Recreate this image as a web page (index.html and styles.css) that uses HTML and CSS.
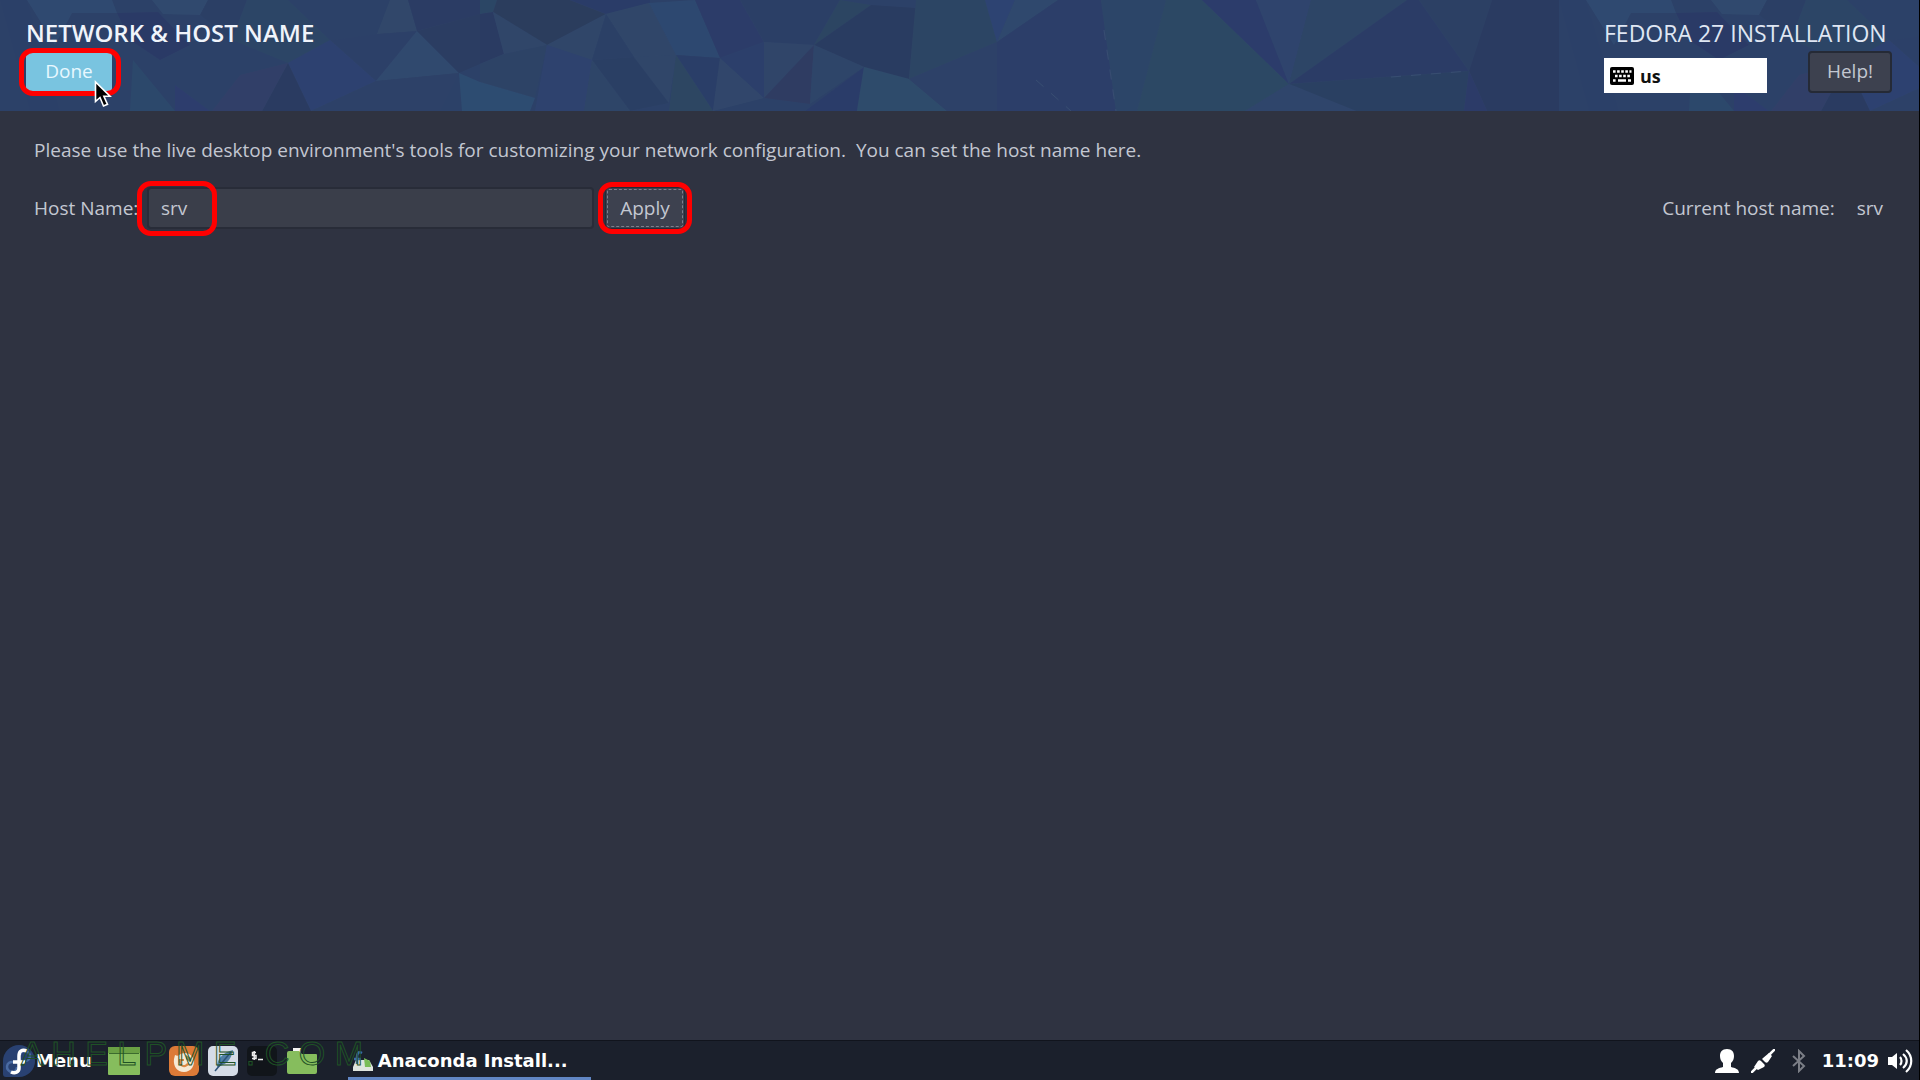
FILE: index.html
```html
<!DOCTYPE html>
<html lang="en">
<head>
  <meta charset="UTF-8">
  <title>Network &amp; Host Name</title>
  <meta name="viewport" content="width=device-width, initial-scale=1.0">
  <link rel="stylesheet" href="styles.css">
</head>
<body>
  <header class="topbar">
    <svg class="topbar-bg" aria-hidden="true">
      <defs>
        <pattern id="facets" width="1559" height="111" patternUnits="userSpaceOnUse">
          <path fill="#2b4068" d="M0 0h27l33 111H30z"/>
          <path fill="#304b72" d="M27 0h85l5 13H72L55 45z"/>
          <path fill="#2a3966" d="M117 13l41-1 32 33-30 15-30-20z"/>
          <path fill="#314b70" d="M152 0h56l-8 15-37-1z"/>
          <path fill="#2b3f65" d="M208 0h39l-15 40-32-25z"/>
          <path fill="#2c4666" d="M247 0h41l42 40-42 23-56-23z"/>
          <path fill="#32496b" d="M390 0h18l9 31-40 3z"/>
          <path fill="#2b3c64" d="M408 0h72v15l-63 16z"/>
          <path fill="#2d4068" d="M377 34l-47 6 46 41 41-50z"/>
          <path fill="#314b70" d="M417 31l42 42-83 8z"/>
          <path fill="#2b3d62" d="M417 31l63-17v50l-21 9z"/>
          <path fill="#2e4272" d="M330 40l46 41-65 30-23-48z"/>
          <path fill="#2e4268" d="M376 81l83-8-19 38H311z"/>
          <path fill="#2a3b60" d="M288 63l23 48h-49z"/>
          <path fill="#323f68" d="M288 63l-48 12-28 36h50z"/>
          <path fill="#2c4a6c" d="M133 60l42 51h-45z"/>
          <path fill="#2e3d6f" d="M175 85l35 26h-35z"/>
          <path fill="#2b4865" d="M480 0h17l-4 12-13 2z"/>
          <path fill="#2b3d5c" d="M497 0h73l36 14-59 31-54-33z"/>
          <path fill="#2a3a62" d="M480 14l13-2 11 42-24 10z"/>
          <path fill="#31476a" d="M493 12l54 33-43 9zM547 45l59-31-14 46z"/>
          <path fill="#2e4466" d="M504 54l43-9-12 53-55-16V64z"/>
          <path fill="#2f4370" d="M547 45l45 15-8 51h-49z"/>
          <path fill="#2e4e73" d="M459 73l21 9 55 16-5 13h-68z"/>
          <path fill="#2a3c68" d="M570 0h80v3l-44 11z"/>
          <path fill="#31486a" d="M606 14l43-11 27 52-42 2z"/>
          <path fill="#2e4a72" d="M649 3l46-3 25 58-44-3z"/>
          <path fill="#2c3c6a" d="M695 0h45l24 42-44 16z"/>
          <path fill="#2b3f66" d="M740 0h100l-26 45-50-3z"/>
          <path fill="#2c4662" d="M840 0l31 5-57 40z"/>
          <path fill="#293c60" d="M871 5l45 3-7 71-45-12-50-22z"/>
          <path fill="#2b4066" d="M606 14l28 43-42 3z"/>
          <path fill="#2a3f64" d="M592 60l42-3 35 46-39 8z"/>
          <path fill="#2f4668" d="M592 60l38 51h-46z"/>
          <path fill="#31476a" d="M634 57l42-2-7 48z"/>
          <path fill="#2a3e68" d="M676 55l44 3-7 53z"/>
          <path fill="#2e4862" d="M676 55l37 56h-44z"/>
          <path fill="#32486c" d="M720 58l44 40-51 13z"/>
          <path fill="#2c3f6c" d="M720 58l44-16v56z"/>
          <path fill="#31466a" d="M764 42l50 3-50 53z"/>
          <path fill="#303c62" d="M814 45l-4 59-46-6z"/>
          <path fill="#2f466a" d="M814 45l50 22-54 37z"/>
          <path fill="#2a3c6a" d="M864 67l-7 44h-52z"/>
          <path fill="#2f4d6c" d="M864 67l45 12 38 32h-90z"/>
          <path fill="#2d4664" d="M916 0h69l12 42-88 37z"/>
          <path fill="#2e4168" d="M909 79l88-37v69h-50z"/>
          <path fill="#2e4474" d="M985 0h30l-18 42z"/>
          <path fill="#304a6e" d="M1015 0h43l-61 42z"/>
          <path fill="#2c3e6a" d="M1058 0h43l15 111H997V42z"/>
          <path fill="#2d4668" d="M1101 0h65l-29 111h-21z"/>
          <path fill="#2d4a64" d="M1166 0h36l87 84-44 27h-108z"/>
          <path fill="#2c3c6c" d="M1202 0h54l33 84z"/>
          <path fill="#30456e" d="M1256 0h55l-22 84z"/>
          <path fill="#2e4666" d="M1311 0h96l-118 84z"/>
          <path fill="#2b3c66" d="M1407 0h12l50 71-180 13z"/>
          <path fill="#2a4062" d="M1289 84l180-13-5 40h-108z"/>
          <path fill="#30466c" d="M1289 84l67 27h-111z"/>
          <path fill="#2c4064" d="M1419 0h73l-23 71z"/>
          <path fill="#2a3b60" d="M1492 0h67v111h-72l-18-40z"/>
          <path fill="#2c3a68" d="M1469 71l18 40h-23z"/>
          <path fill="none" stroke="#3a5073" stroke-dasharray="10 10" d="M1391 77l78-6M1104 30l12 81M1036 80l35 31"/>
        </pattern>
      </defs>
      <rect width="100%" height="100%" fill="url(#facets)"/>
    </svg>

    <div class="topbar-left">
      <h1>NETWORK &amp; HOST NAME</h1>
      <div class="marked marked-done">
        <button class="btn btn-done" type="button">Done</button>
        <svg class="cursor" width="20" height="28" viewBox="0 0 20 28" aria-hidden="true">
          <path fill="#000" stroke="#fff" stroke-width="1.6" d="M1.500 2v19.500l4.500-4 3.500 8.500 4-1.700-3.600-8H16z"/>
        </svg>
      </div>
    </div>

    <div class="topbar-right">
      <h2>FEDORA 27 INSTALLATION</h2>
      <div class="topbar-tools">
        <button class="keyboard" type="button">
          <svg width="24" height="18" viewBox="0 0 24 18" aria-hidden="true">
            <rect width="24" height="18" rx="2" fill="#000"/>
            <path stroke="#fff" stroke-width="2.600" stroke-dasharray="2.600 1.500" d="M3 4.500h18.500M5 9h16M3 13.500h3"/>
            <path stroke="#fff" stroke-width="2.600" d="M8 13.500h8M18 13.500h3"/>
          </svg>
          <span>us</span>
        </button>
        <button class="btn btn-help" type="button">Help!</button>
      </div>
    </div>
  </header>

  <main class="content">
    <p class="intro">Please use the live desktop environment's tools for customizing your network configuration.&nbsp; You can set the host name here.</p>
    <div class="host-row">
      <label for="hostname">Host Name:</label>
      <div class="marked marked-input">
        <input id="hostname" class="host-input" type="text" value="srv">
      </div>
      <div class="marked marked-apply">
        <button class="btn btn-apply" type="button">Apply</button>
      </div>
      <div class="current"><span>Current host name:</span><span>srv</span></div>
    </div>
  </main>

  <footer class="taskbar">
    <button class="menu" type="button">
      <svg width="32" height="32" viewBox="0 0 32 32" aria-hidden="true">
        <path fill="#294172" d="M16 0a16 16 0 1 1 0 32H3a3 3 0 0 1-3-3V16A16 16 0 0 1 16 0z"/>
        <path fill="none" stroke="#4a6ba3" stroke-width="2.500" d="M17 16h4a5 5 0 1 0-4-6M14 17h-4a5 5 0 1 0 4 5"/>
        <path fill="none" stroke="#fff" stroke-width="3.500" d="M24 6c-5-2-8 0-8 5v12c0 4-4 6-8 4M10 17h12"/>
      </svg>
      <span>Menu</span>
    </button>
    <div class="launchers">
      <svg width="34" height="30" viewBox="0 0 34 30" aria-hidden="true">
        <rect x="1" y="1" width="32" height="28" rx="1" fill="#86bd5d"/>
        <path fill="#6aa044" d="M1 1h32v6H1z"/>
        <path stroke="#3c6b2e" d="M2 7.500h30"/>
      </svg>
      <svg class="gap-before" width="30" height="30" viewBox="0 0 30 30" aria-hidden="true">
        <rect width="30" height="30" rx="6" fill="#dc7a37"/>
        <path fill="#f6e9d5" d="M6 9c2 1 3 1 4 0 4-3 11-3 14 3 3 7-2 14-9 14S4 20 5 13z"/>
        <path fill="#dc8a45" d="M10 13h5v2h-3v3c2 2 5 1 6-1l2 1c-2 4-7 4-9 1-1-2-2-4-1-6z"/>
        <path fill="#8d8f56" d="M17 9l5 3-1 4-4-3z"/>
      </svg>
      <svg width="30" height="30" viewBox="0 0 30 30" aria-hidden="true">
        <rect width="30" height="30" rx="5" fill="#d5dce7"/>
        <path fill="#527fa5" d="M25 4C16 6 9 12 9 21c8-2 14-6 16-17z"/>
        <path fill="none" stroke="#2b5278" stroke-width="1.500" d="M7 25L23 6"/>
      </svg>
      <svg width="30" height="30" viewBox="0 0 30 30" aria-hidden="true">
        <rect width="30" height="30" rx="5" fill="#11151a"/>
        <path fill="none" stroke="#eee" stroke-width="1.500" d="M9 6.500H5.500v3H9v3H5M7.200 5v9M11 13.500h5"/>
      </svg>
      <svg width="32" height="30" viewBox="0 0 32 30" aria-hidden="true">
        <path fill="#f4f4f4" d="M7 2h8v5H7z"/>
        <path fill="#86bd5d" d="M3 5h10l3 3h14a1 1 0 0 1 1 1v17a2 2 0 0 1-2 2H3a2 2 0 0 1-2-2V7a2 2 0 0 1 2-2z"/>
      </svg>
    </div>
    <button class="task" type="button">
      <svg width="22" height="22" viewBox="0 0 22 22" aria-hidden="true">
        <path fill="#dfe5df" d="M4 10h13l4 7v4H1v-4z"/>
        <path fill="#79bd58" d="M12 8l6 3 1 6h-6z"/>
        <path fill="none" stroke="#3c6ea8" stroke-width="2.500" d="M10 3C6 1 5 4 5 7v7M2 9h7"/>
      </svg>
      <span>Anaconda Install...</span>
    </button>
    <div class="tray">
      <svg width="24" height="24" viewBox="0 0 24 24" aria-hidden="true">
        <path fill="#fff" d="M12 0c5 0 7 3 7 7 0 3-1 5-3 7v4c4 1 8 2 8 6H0c0-4 4-5 8-6v-4c-2-2-3-4-3-7 0-4 2-7 7-7z"/>
      </svg>
      <svg width="24" height="24" viewBox="0 0 24 24" aria-hidden="true">
        <path stroke="#fff" stroke-width="2.500" d="M0 24l6-6M18 6l6-6"/>
        <path fill="#fff" d="M3 18l4-6c1-1 2-1 3 0l3 3c1 1 1 2 0 3l-6 3zM12 9l6-5 3 3-4 6c-1 1-2 1-3 0l-2-2c-1-1-1-1 0-2z"/>
      </svg>
      <svg class="bluetooth" width="14" height="24" viewBox="0 0 14 24" aria-hidden="true">
        <path fill="none" stroke="#7b7e86" stroke-width="2" d="M1 7l11 10-5 5V2l5 5L1 17"/>
      </svg>
      <time>11:09</time>
      <svg width="26" height="26" viewBox="0 0 26 26" aria-hidden="true">
        <path fill="#fff" d="M1 9h4l5-4v16l-5-4H1z"/>
        <path fill="none" stroke="#fff" stroke-width="2.200" d="M13 9c2 2 2 6 0 8M16 6c5 4 5 10 0 14M19 2c7 6 7 16 0 22"/>
      </svg>
    </div>
    <div class="watermark">A H E L P M E . C O M</div>
  </footer>
</body>
</html>
```

FILE: styles.css
```css
*, *::after { box-sizing: border-box; }
body {
  margin: 0;
  min-height: 100vh;
  display: flex;
  flex-direction: column;
  background: #2f3341;
  color: #c3c7d1;
  border-right: 1px solid #000;
  font-family: "Open Sans", "Noto Sans", sans-serif;
  font-size: 19px;
  line-height: 26px;
}
h1, h2, p { margin: 0; }
button, input { font: inherit; color: inherit; }

.topbar {
  position: relative;
  display: flex;
  justify-content: space-between;
  height: 111px;
  padding: 19px 27px 0 26px;
  background: #2c4168;
}
.topbar-bg { position: absolute; top: 0; left: 0; width: 100%; height: 100%; opacity: 0.85; }
.topbar-left, .topbar-right { position: relative; }
h1, h2 { line-height: 28px; color: #f0f4fb; }
h1 { font-size: 24px; font-weight: 600; }
h2 { font-size: 23px; font-weight: 400; color: #dfe6f3; }
.btn { border: 1px solid #252a36; border-radius: 4px; background: #3d414f; padding: 0 16px; }
.btn-done { width: 86px; height: 40px; background: #79c4e0; border: 0; color: #e8f8ff; padding-bottom: 2px; }
.topbar-tools { display: flex; gap: 41px; align-items: flex-start; margin-top: 4px; }
.keyboard {
  display: flex;
  align-items: center;
  gap: 6px;
  width: 163px;
  height: 35px;
  margin-top: 7px;
  padding: 0 6px;
  border: 0;
  background: #fff;
  color: #111;
  font-weight: 700;
  font-size: 18px;
}
.btn-help { width: 84px; height: 42px; border-width: 2px; padding: 0 0 2px; }

/* red rings drawn over the controls */
.marked { position: relative; }
.marked::after {
  content: "";
  position: absolute;
  border: 5px solid #f00;
  border-radius: 14px;
  pointer-events: none;
}
.marked-done { width: 86px; margin-top: 5px; }
.marked-done::after { inset: -4px -9px -4px -7px; }
.marked-input::after { top: -6px; left: -10px; width: 80px; height: 55px; }
.marked-apply::after { inset: -5px -7px; }
.cursor { position: absolute; top: 28px; left: 68px; z-index: 1; }

.content { flex: 1; padding: 26px 36px 0 34px; }
.host-row { display: flex; align-items: center; margin-top: 24px; }
.host-row label { width: 113px; }
.host-input {
  display: block;
  width: 447px;
  height: 42px;
  padding: 0 12px;
  border: 2px solid #282c38;
  border-radius: 4px;
  background: #3a3e4a;
}
.marked-apply { margin-left: 11px; }
.btn-apply { width: 80px; height: 42px; padding: 0; outline: 1px dashed #7b808d; outline-offset: -3px; }
.current { display: flex; gap: 22px; margin-left: auto; }

.taskbar {
  position: relative;
  display: flex;
  align-items: center;
  height: 40px;
  padding: 0 6px 0 3px;
  border-top: 1px solid #11141d;
  background: #1b202c;
  color: #fff;
  font-family: "DejaVu Sans", sans-serif;
  font-size: 18px;
  font-weight: 700;
}
.taskbar button { display: flex; align-items: center; height: 100%; padding: 0; border: 0; background: none; }
.taskbar .menu { gap: 1px; }
.launchers { display: flex; align-items: center; gap: 9px; margin-left: 15px; }
.gap-before { margin-left: 19px; }
.taskbar .task { gap: 4px; width: 243px; margin-left: 30px; padding: 3px 4px 0; border-bottom: 3px solid #6186c4; }
.tray { display: flex; align-items: center; gap: 12px; margin-left: auto; }
.tray time { margin-right: -4px; }
.bluetooth { margin: 0 4px 0 5px; }
.watermark {
  position: absolute;
  top: -6px;
  left: 21px;
  color: transparent;
  -webkit-text-stroke: 1px #1f5226;
  font: 400 34px/36px "Liberation Sans", sans-serif;
  white-space: nowrap;
  pointer-events: none;
}
```
